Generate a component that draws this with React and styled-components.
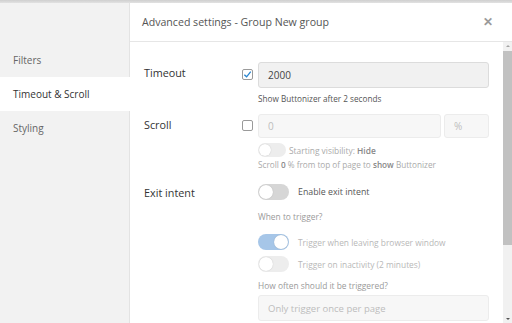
import React from "react";
import styled, { createGlobalStyle } from "styled-components";

const Global = createGlobalStyle`
  html, body {
    margin: 0;
    padding: 0;
    background: #ffffff;
  }
  body {
    font-family: "Open Sans", "Noto Sans", sans-serif;
    overflow: hidden;
  }
`;

const Frame = styled.div`
  width: 512px;
  height: 323px;
  display: flex;
  flex-direction: column;
  overflow: hidden;
`;

const TopStrip = styled.div`
  height: 3px;
  background: linear-gradient(#cfcfcf, #e2e2e2);
  flex-shrink: 0;
`;

const Body = styled.div`
  flex: 1;
  display: flex;
  min-height: 0;
`;

const Sidebar = styled.div`
  width: 129px;
  background: #f2f2f2;
  border-right: 1px solid #e3e3e3;
  padding-top: 40px;
  flex-shrink: 0;
`;

const SideItem = styled.div`
  height: 34px;
  display: flex;
  align-items: center;
  padding-left: 13px;
  font-size: 10px;
  color: ${({ active }) => (active ? "#333" : "#666")};
  background: ${({ active }) => (active ? "#fff" : "transparent")};
  margin-right: ${({ active }) => (active ? "-1px" : "0")};
`;

const Main = styled.div`
  flex: 1;
  display: flex;
  flex-direction: column;
  min-width: 0;
`;

const Header = styled.div`
  height: 38px;
  border-bottom: 1px solid #e6e6e6;
  display: flex;
  align-items: center;
  justify-content: space-between;
  padding: 0 19px 0 12px;
  flex-shrink: 0;
`;

const HeaderTitle = styled.div`
  font-size: 10.6px;
  color: #555;
`;

const Close = styled.div`
  font-size: 12px;
  font-weight: bold;
  color: #9a9a9a;
  line-height: 1;
`;

const ScrollWrap = styled.div`
  flex: 1;
  display: flex;
  min-height: 0;
`;

const Content = styled.div`
  flex: 1;
  padding: 20px 14px 0 14px;
  display: flex;
  flex-direction: column;
`;

const Row = styled.div`
  display: flex;
  align-items: flex-start;
  margin-bottom: ${({ mb }) => mb || 0}px;
`;

const Label = styled.div`
  width: 98px;
  font-size: 10.8px;
  color: #333;
  line-height: ${({ lh }) => lh || 22}px;
  flex-shrink: 0;
`;

const CheckCol = styled.div`
  width: 16px;
  padding-top: ${({ pt }) => pt || 0}px;
  flex-shrink: 0;
`;

const Box = styled.div`
  width: 9px;
  height: 9px;
  border: 1px solid #9a9a9a;
  border-radius: 2px;
  background: #fff;
  display: flex;
  align-items: center;
  justify-content: center;
`;

const Fields = styled.div`
  flex: 1;
  display: flex;
  flex-direction: column;
`;

const InputLine = styled.div`
  display: flex;
  gap: 3px;
`;

const Input = styled.div`
  flex: ${({ w, grow }) => (w ? `0 0 ${w}px` : grow ? "1" : "none")};
  height: ${({ h }) => h || 24}px;
  border: 1px solid ${({ off }) => (off ? "#ececec" : "#dcdcdc")};
  background: ${({ off }) => (off ? "#f7f7f7" : "#f1f1f1")};
  border-radius: 3px;
  display: flex;
  align-items: center;
  padding-left: 9px;
  margin-top: ${({ mt }) => mt || 0}px;
  font-size: ${({ fs }) => fs || 10}px;
  color: ${({ off }) => (off ? "#bdbdbd" : "#444")};
  box-sizing: content-box;
`;

const Help = styled.div`
  font-size: 8.2px;
  color: ${({ c }) => c || "#555"};
  margin-top: ${({ mt }) => mt || 0}px;
  line-height: 12px;
  b {
    font-weight: 600;
    color: #888;
  }
`;

const ToggleLine = styled.div`
  display: flex;
  align-items: center;
  gap: ${({ gap }) => gap || 9}px;
  margin-top: ${({ mt }) => mt || 0}px;
`;

const Track = styled.div`
  width: ${({ small }) => (small ? 28 : 31)}px;
  height: ${({ small }) => (small ? 14 : 16)}px;
  border-radius: 8px;
  background: ${({ on, off }) => (on ? "#a6c6e8" : off ? "#ededed" : "#d6d6d6")};
  position: relative;
  flex-shrink: 0;
`;

const Knob = styled.div`
  position: absolute;
  top: 1px;
  left: ${({ on, small }) => (on ? (small ? "13px" : "16px") : "1px")};
  width: ${({ small }) => (small ? 12 : 14)}px;
  height: ${({ small }) => (small ? 12 : 14)}px;
  border-radius: 50%;
  background: #fff;
  box-shadow: 0 0 1px rgba(0, 0, 0, 0.25);
`;

const ToggleText = styled.div`
  font-size: ${({ fs }) => fs || 8.4}px;
  color: ${({ c }) => c || "#555"};
  b {
    font-weight: 600;
    color: #888;
  }
`;

const Question = styled.div`
  font-size: 8.4px;
  line-height: 12px;
  color: #9a9a9a;
  margin-top: ${({ mt }) => mt || 0}px;
`;

const ScrollBar = styled.div`
  width: 9px;
  background: #f1f1f1;
  display: flex;
  flex-direction: column;
  align-items: center;
  flex-shrink: 0;
`;

const Arrow = styled.div`
  width: 0;
  height: 0;
  border-left: 2px solid transparent;
  border-right: 2px solid transparent;
  ${({ down }) => (down ? "border-top: 2px solid #555;" : "border-bottom: 2px solid #a3a3a3;")}
  margin: 3px 0;
`;

const Thumb = styled.div`
  width: 9px;
  height: 194px;
  background: #c1c1c1;
  margin-top: 1px;
`;

const Spacer = styled.div`
  flex: 1;
`;

function Toggle({ on, off, small }) {
  const s = small ? 1 : 0;
  return (
    <Track on={on ? 1 : 0} off={off ? 1 : 0} small={s}>
      <Knob on={on ? 1 : 0} small={s} />
    </Track>
  );
}

export default function App() {
  return (
    <>
      <Global />
      <Frame>
        <TopStrip />
        <Body>
          <Sidebar>
            <SideItem>Filters</SideItem>
            <SideItem active>Timeout &amp; Scroll</SideItem>
            <SideItem>Styling</SideItem>
          </Sidebar>
          <Main>
            <Header>
              <HeaderTitle>Advanced settings - Group New group</HeaderTitle>
              <Close>✕</Close>
            </Header>
            <ScrollWrap>
              <Content>
                <Row mb={9}>
                  <Label>Timeout</Label>
                  <CheckCol pt={7}>
                    <Box>
                      <svg width="9" height="9" viewBox="0 0 10 10">
                        <path d="M1.5 5.2 L4 7.6 L8.6 1.8" fill="none" stroke="#2a86d0" strokeWidth="1.5" />
                      </svg>
                    </Box>
                  </CheckCol>
                  <Fields>
                    <Input>2000</Input>
                    <Help mt={5}>Show Buttonizer after 2 seconds</Help>
                  </Fields>
                </Row>
                <Row mb={13}>
                  <Label>Scroll</Label>
                  <CheckCol pt={6}>
                    <Box />
                  </CheckCol>
                  <Fields>
                    <InputLine>
                      <Input off grow h={22}>0</Input>
                      <Input off w={34} h={22}>%</Input>
                    </InputLine>
                    <ToggleLine gap={3} mt={5}>
                      <Toggle off small />
                      <ToggleText c="#aaa">
                        Starting visibility: <b>Hide</b>
                      </ToggleText>
                    </ToggleLine>
                    <Help c="#aaa" mt={2}>
                      Scroll <b>0</b> % from top of page to <b>show</b> Buttonizer
                    </Help>
                  </Fields>
                </Row>
                <Row>
                  <Label lh={18}>Exit intent</Label>
                  <CheckCol />
                  <Fields>
                    <ToggleLine>
                      <Toggle />
                      <ToggleText fs={8.8}>Enable exit intent</ToggleText>
                    </ToggleLine>
                    <Question mt={11}>When to trigger?</Question>
                    <ToggleLine mt={11}>
                      <Toggle on />
                      <ToggleText c="#b8b8b8">Trigger when leaving browser window</ToggleText>
                    </ToggleLine>
                    <ToggleLine mt={6}>
                      <Toggle off />
                      <ToggleText c="#b8b8b8">Trigger on inactivity (2 minutes)</ToggleText>
                    </ToggleLine>
                    <Question mt={8}>How often should it be triggered?</Question>
                    <Input off mt={3} fs={9.5}>Only trigger once per page</Input>
                  </Fields>
                </Row>
              </Content>
              <ScrollBar>
                <Arrow />
                <Thumb />
                <Spacer />
                <Arrow down />
              </ScrollBar>
            </ScrollWrap>
          </Main>
        </Body>
      </Frame>
    </>
  );
}
